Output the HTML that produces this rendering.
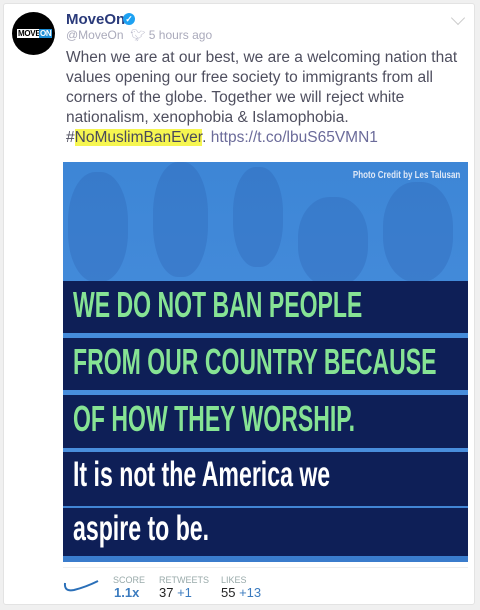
<!DOCTYPE html>
<html><head><meta charset="utf-8"><style>
*{margin:0;padding:0;box-sizing:border-box}
body{width:480px;height:610px;background:#f0f0f0;font-family:"Liberation Sans",sans-serif;position:relative;overflow:hidden}
.card{position:absolute;left:3px;top:3px;width:472px;height:602px;background:#fff;border:1px solid #e3e3e3;border-radius:3px}
.av{position:absolute;left:12px;top:12px;width:43px;height:43px;border-radius:50%;background:#000}
.av span{position:absolute;top:17px;font:bold 8px "Liberation Sans",sans-serif;letter-spacing:-0.3px}
.name{position:absolute;left:66px;top:11px;font-weight:bold;font-size:15px;color:#2a3a7a}
.chk{position:absolute;left:123px;top:13px;width:12px;height:12px;border-radius:50%;background:#1da1f2;color:#fff;font-size:9px;line-height:12px;text-align:center;font-weight:bold}
.handle{position:absolute;left:66px;top:28px;font-size:12px;color:#aab}
.txt{position:absolute;left:66px;top:48px;width:400px;font-size:15.5px;line-height:20px;color:#4f4f5f}
.hl{background:#f6f650;color:#4a4a5a}
.lnk{color:#6b6b9a}
.chev{position:absolute;left:453px;top:13px;width:10px;height:10px;border-right:1.5px solid #ccc;border-bottom:1.5px solid #ccc;transform:rotate(45deg)}
.img{position:absolute;left:63px;top:162px;width:405px;height:400px;background:linear-gradient(180deg,#3d86d6,#4a8fde 70%,#3a7ccc);overflow:hidden}
.band{position:absolute;left:0;width:405px;background:#0e1f57}
.t{position:absolute;left:10px;font-weight:bold;font-size:36px;white-space:nowrap;transform-origin:0 0;transform:scaleX(0.64)}
.g{color:#86e394}.w{color:#fff;font-size:35px;transform:scaleX(0.66)}
.cred{position:absolute;right:8px;top:8px;color:#dfe8f6;font-size:10px;font-weight:bold;transform:scaleX(.8);transform-origin:100% 0}
.foot{position:absolute;left:63px;top:567px;width:405px;border-top:1px solid #eee}
.lbl{position:absolute;font-size:9px;color:#9aa;top:575px}
.v{position:absolute;top:585px;font-size:13px;color:#222}
.b{color:#3b7bbf}
.p{position:absolute;background:#2a5fae;border-radius:45%;opacity:.3}
</style></head><body>
<div class="card"></div>
<div class="av"><span style="left:5px;background:#fff;color:#000;padding:0 1px">MOVE</span><span style="left:27px;background:#1f8fd6;color:#fff;padding:0 1px">ON</span></div>
<div class="name">MoveOn</div><div class="chk">✓</div>
<div class="handle">@MoveOn &nbsp;<span style="color:#bbc">🐦︎</span> 5 hours ago</div>
<div class="chev"></div>
<div class="txt">When we are at our best, we are a welcoming nation that values opening our free society to immigrants from all corners of the globe. Together we will reject white nationalism, xenophobia &amp; Islamophobia. #<span class="hl">NoMuslimBanEver</span>. <span class="lnk">https://t.co/lbuS65VMN1</span></div>
<div class="img">
<div class="p" style="left:5px;top:10px;width:60px;height:110px"></div>
<div class="p" style="left:90px;top:0;width:55px;height:115px"></div>
<div class="p" style="left:170px;top:5px;width:50px;height:100px"></div>
<div class="p" style="left:235px;top:35px;width:70px;height:90px"></div>
<div class="p" style="left:320px;top:20px;width:70px;height:100px"></div>
<div class="cred">Photo Credit by Les Talusan</div>
<div class="band" style="top:119px;height:52px"></div>
<div class="band" style="top:176px;height:52px"></div>
<div class="band" style="top:233px;height:53px"></div>
<div class="band" style="top:290px;height:54px"></div>
<div class="band" style="top:346px;height:48px"></div>
<div class="t g" style="top:122px">WE DO NOT BAN PEOPLE</div>
<div class="t g" style="top:179px">FROM OUR COUNTRY BECAUSE</div>
<div class="t g" style="top:236px">OF HOW THEY WORSHIP.</div>
<div class="t w" style="top:293px">It is not the America we</div>
<div class="t w" style="top:347px">aspire to be.</div>
</div>
<div class="foot"></div>
<svg style="position:absolute;left:62px;top:578px" width="40" height="20"><path d="M3 5 Q2 14 12 12 Q24 9 36 3" stroke="#2a6fb8" stroke-width="2" fill="none"/></svg>
<div class="lbl" style="left:113px">SCORE</div><div class="v b" style="left:114px;font-weight:bold">1.1x</div>
<div class="lbl" style="left:159px">RETWEETS</div><div class="v" style="left:159px">37 <span class="b">+1</span></div>
<div class="lbl" style="left:221px">LIKES</div><div class="v" style="left:221px">55 <span class="b">+13</span></div>
</body></html>
